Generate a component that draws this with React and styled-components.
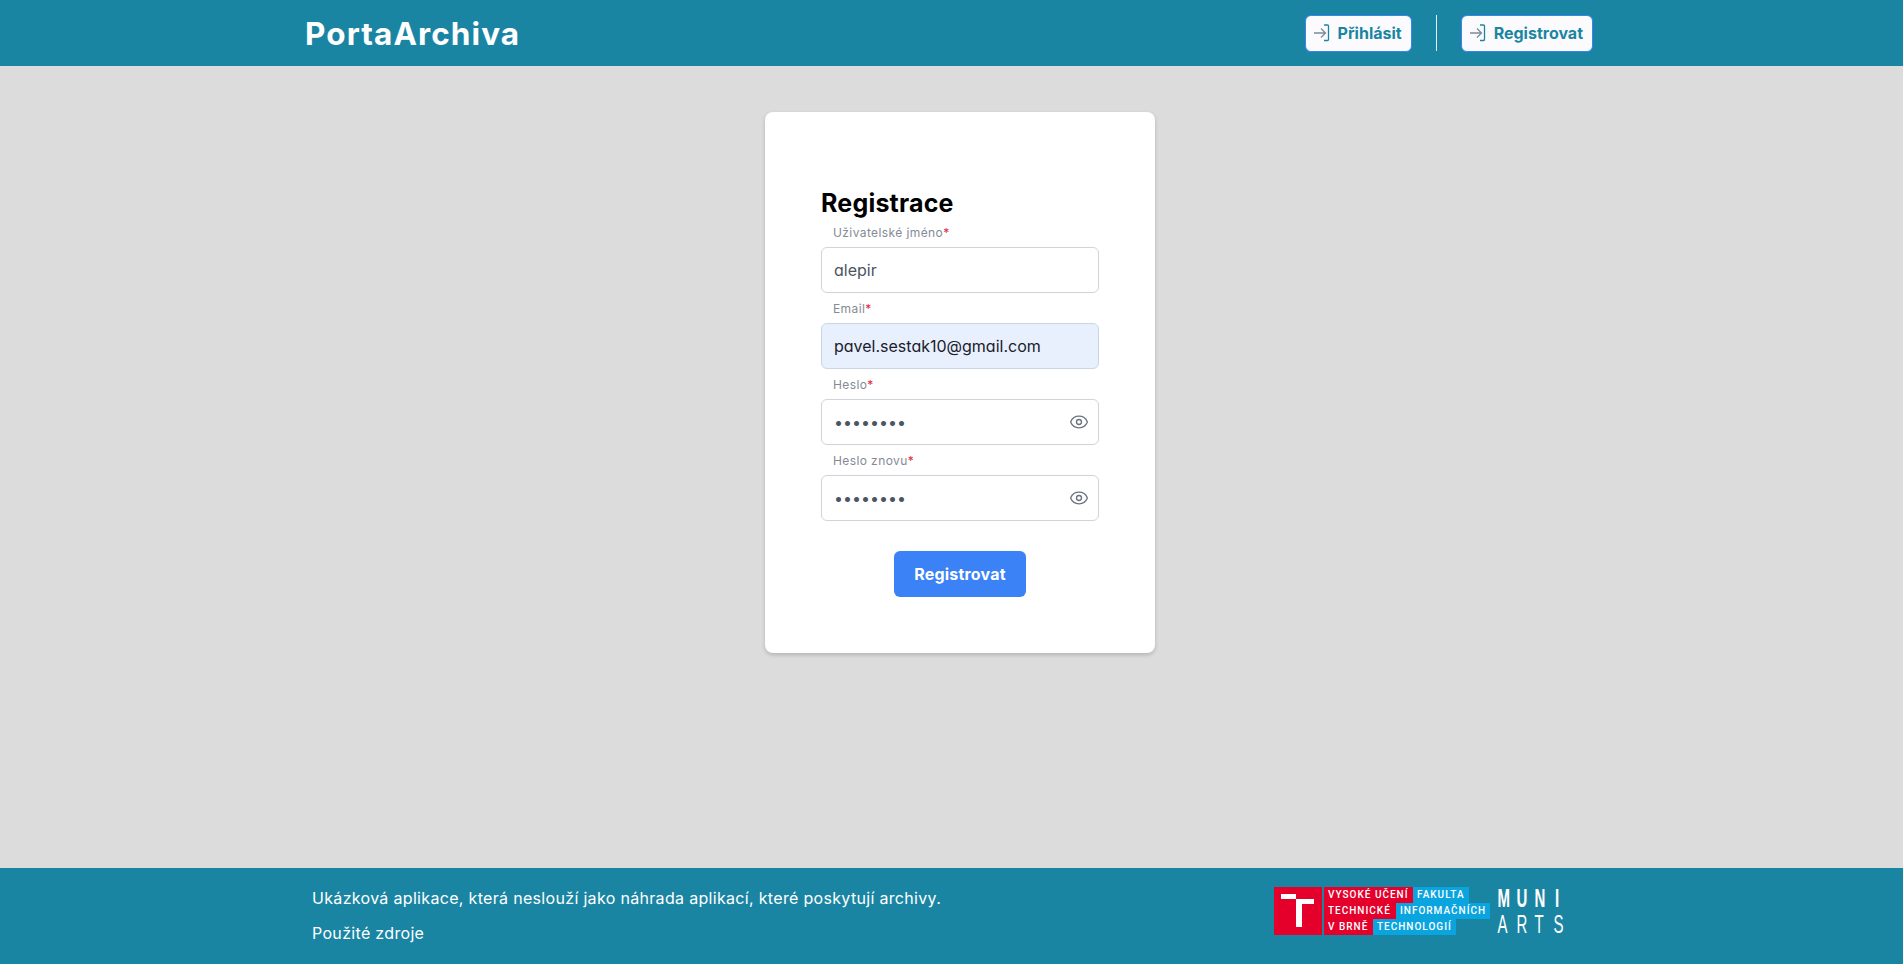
import React from "react";
import styled, { createGlobalStyle } from "styled-components";
import { Eye } from "lucide-react";

const GlobalStyle = createGlobalStyle`
  html, body {
    margin: 0;
    padding: 0;
    height: 100%;
    font-family: "Inter", "Liberation Sans", sans-serif;
  }
  * {
    box-sizing: border-box;
  }
`;

const Page = styled.div`
  height: 964px;
  display: flex;
  flex-direction: column;
  background: #dcdcdc;
  overflow: hidden;
`;

const Header = styled.header`
  height: 66px;
  flex: none;
  background: #1a85a3;
  padding: 0 310px 0 305px;
  display: flex;
  align-items: center;
  justify-content: space-between;
`;

const Logo = styled.a`
  font-family: "Inter", sans-serif;
  font-weight: 700;
  font-size: 31.5px;
  letter-spacing: 1.1px;
  color: #fff;
`;

const Nav = styled.nav`
  display: flex;
  align-items: center;
  gap: 24px;
`;

const NavButton = styled.button`
  height: 37px;
  padding: 0 9px 0 7px;
  display: flex;
  align-items: center;
  gap: 7px;
  background: #fbfbfd;
  border: 1px solid #3b82f6;
  border-radius: 6px;
  color: #1a85a3;
  font-family: "Inter", sans-serif;
  font-weight: 700;
  font-size: 16px;
`;

const NavIcon = styled.svg`
  flex: none;
  width: 18px;
  height: 18px;
`;

const Divider = styled.div`
  width: 1px;
  height: 36px;
  background: #e6eef1;
`;

const Main = styled.main`
  flex: 1;
  display: flex;
  justify-content: center;
  align-items: flex-start;
  padding: 46px 0 0 17px;
`;

const Card = styled.form`
  width: 390px;
  height: 541px;
  background: #fff;
  border-radius: 8px;
  box-shadow: 0 2px 4px rgba(0, 0, 0, 0.18);
  padding: 75px 56px 56px;
  display: flex;
  flex-direction: column;
`;

const Title = styled.h1`
  margin: 0;
  height: 30px;
  font-family: "Inter", sans-serif;
  font-weight: 700;
  font-size: 25px;
  letter-spacing: 0.2px;
  line-height: 32px;
  color: #000;
`;

const Field = styled.div`
  display: flex;
  flex-direction: column;
`;

const Label = styled.label`
  height: 30px;
  padding-left: 12px;
  display: flex;
  align-items: center;
  font-family: "Inter", sans-serif;
  font-size: 12px;
  letter-spacing: 0.4px;
  color: #848b96;
`;

const Required = styled.span`
  color: #e5203a;
`;

const InputWrap = styled.div`
  position: relative;
  height: 46px;
`;

const Input = styled.input`
  width: 100%;
  height: 100%;
  padding: 0 12px;
  border: 1px solid ${(p) => (p.$filled ? "#cbd5e1" : "#d0d3da")};
  border-radius: 6px;
  background: ${(p) => (p.$filled ? "#e8f0fd" : "#fff")};
  color: ${(p) => (p.$filled ? "#1a202c" : "#4b5563")};
  font-family: "Inter", sans-serif;
  font-feature-settings: "cv11";
  font-size: 16px;
  outline: none;
`;

const EyeButton = styled.span`
  position: absolute;
  right: 10px;
  top: 13px;
  display: flex;
  color: #6b7280;
`;

const Submit = styled.button`
  align-self: center;
  margin-top: 30px;
  width: 132px;
  height: 46px;
  border: none;
  border-radius: 6px;
  background: #3b82f6;
  color: #fff;
  font-family: "Inter", sans-serif;
  font-weight: 700;
  font-size: 16px;
  letter-spacing: 0.2px;
`;

const Footer = styled.footer`
  height: 96px;
  flex: none;
  background: #1a85a3;
  padding: 0 340px 0 312px;
  display: flex;
  align-items: center;
  justify-content: space-between;
`;

const FooterText = styled.div`
  display: flex;
  flex-direction: column;
  gap: 16px;
  font-family: "Inter", sans-serif;
  font-size: 16px;
  letter-spacing: 0.32px;
  line-height: 19px;
  color: #fff;
`;

const Logos = styled.div`
  display: flex;
  align-items: center;
  gap: 5px;
  padding-bottom: 10px;
`;

const Vut = styled.div`
  display: flex;
  gap: 2px;
`;

const VutMark = styled.svg`
  display: block;
  width: 48px;
  height: 48px;
`;

const VutRows = styled.div`
  display: flex;
  flex-direction: column;
`;

const VutRow = styled.div`
  display: flex;
  height: 16px;
`;

const VutCell = styled.span`
  width: ${(p) => p.$w}px;
  padding-left: 4px;
  background: ${(p) => (p.$blue ? "#0aa5df" : "#e4002b")};
  color: #fff;
  font-family: "Roboto", sans-serif;
  font-weight: 500;
  font-size: 10px;
  line-height: 16px;
  letter-spacing: 1px;
  white-space: nowrap;
`;

const Muni = styled.div`
  display: flex;
  flex-direction: column;
  gap: 8px;
  color: #fff;
  font-family: "Liberation Sans", sans-serif;
  line-height: 18px;
  font-size: 25px;
  width: 68px;
`;

const MuniLine = styled.div`
  display: flex;
  justify-content: space-between;
  font-weight: ${(p) => (p.$bold ? 700 : 400)};
  span {
    display: block;
    width: 12px;
    text-align: center;
    transform: scaleX(0.6);
  }
`;

const Letters = ({ text, bold }) => (
  <MuniLine $bold={bold}>
    {text.split("").map((c) => (
      <span key={c}>{c}</span>
    ))}
  </MuniLine>
);

const LoginIcon = () => (
  <NavIcon viewBox="0 0 18 18" fill="none" strokeWidth="1.3">
    <path d="M1 9H12.5M8 4.5 12.5 9 8 13.5" stroke="#7b8a9a" />
    <path d="M11 1h3.5a1 1 0 0 1 1 1v13.5a1 1 0 0 1-1 1H11" stroke="#1a85a3" />
  </NavIcon>
);

const fields = [
  { label: "Uživatelské jméno", value: "alepir", type: "text" },
  { label: "Email", value: "pavel.sestak10@gmail.com", type: "email", filled: true },
  { label: "Heslo", value: "password", type: "password" },
  { label: "Heslo znovu", value: "password", type: "password" },
];

export default function App() {
  return (
    <Page>
      <GlobalStyle />
      <Header>
        <Logo>PortaArchiva</Logo>
        <Nav>
          <NavButton type="button">
            <LoginIcon />
            Přihlásit
          </NavButton>
          <Divider />
          <NavButton type="button">
            <LoginIcon />
            Registrovat
          </NavButton>
        </Nav>
      </Header>
      <Main>
        <Card onSubmit={(e) => e.preventDefault()}>
          <Title>Registrace</Title>
          {fields.map((f) => (
            <Field key={f.label}>
              <Label>
                {f.label}
                <Required>*</Required>
              </Label>
              <InputWrap>
                <Input type={f.type} value={f.value} $filled={f.filled} readOnly />
                {f.type === "password" && (
                  <EyeButton>
                    <Eye size={20} strokeWidth={1.6} />
                  </EyeButton>
                )}
              </InputWrap>
            </Field>
          ))}
          <Submit type="submit">Registrovat</Submit>
        </Card>
      </Main>
      <Footer>
        <FooterText>
          <span>Ukázková aplikace, která neslouží jako náhrada aplikací, které poskytují archivy.</span>
          <span>Použité zdroje</span>
        </FooterText>
        <Logos>
          <Vut>
            <VutMark viewBox="0 0 48 48">
              <rect width="48" height="48" fill="#e4002b" />
              <path d="M7 7h15v5h18v5H28v23h-6V12H7z" fill="#fff" />
            </VutMark>
            <VutRows>
              <VutRow>
                <VutCell $w={89}>VYSOKÉ UČENÍ</VutCell>
                <VutCell $w={56} $blue>FAKULTA</VutCell>
              </VutRow>
              <VutRow>
                <VutCell $w={72}>TECHNICKÉ</VutCell>
                <VutCell $w={94} $blue>INFORMAČNÍCH</VutCell>
              </VutRow>
              <VutRow>
                <VutCell $w={49}>V BRNĚ</VutCell>
                <VutCell $w={83} $blue>TECHNOLOGIÍ</VutCell>
              </VutRow>
            </VutRows>
          </Vut>
          <Muni>
            <Letters text="MUNI" bold />
            <Letters text="ARTS" />
          </Muni>
        </Logos>
      </Footer>
    </Page>
  );
}
